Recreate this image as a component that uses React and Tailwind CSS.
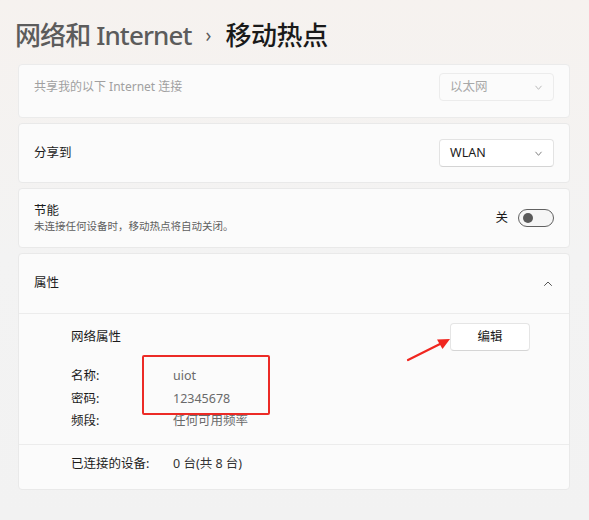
import React from "react";

const font = { fontFamily: '"Noto Sans", "Noto Sans CJK SC", sans-serif' };

function Chevron({ up, className }) {
  return (
    <svg viewBox="0 0 12 12" className={className} fill="none">
      <path
        d={up ? "M2.5 7.5 L6 4 L9.5 7.5" : "M3 4.5 L6 8 L9 4.5"}
        stroke="currentColor"
        strokeWidth="1"
        strokeLinecap="round"
        strokeLinejoin="round"
      />
    </svg>
  );
}

function Dropdown({ label, disabled }) {
  return (
    <div
      className={
        disabled
          ? "flex h-[28px] w-[115px] items-center justify-between rounded-[4px] border border-[#ececec] bg-[#fbfbfb] pl-[10px] pr-[9px] text-[12.5px] text-[#a8a8a8]"
          : "flex h-[28px] w-[115px] items-center justify-between rounded-[4px] border border-[#e3e3e3] border-b-[#d4d4d4] bg-white pl-[10px] pr-[9px] text-[12.5px] text-[#1b1b1b]"
      }
    >
      <span>{label}</span>
      <Chevron className={disabled ? "h-[11px] w-[11px] text-[#b5b5b5]" : "h-[11px] w-[11px] text-[#777]"} />
    </div>
  );
}

export default function App() {
  return (
    <div
      className="relative h-[520px] w-[589px] overflow-hidden bg-gradient-to-b from-[#f6f2ef] via-[#f3f3f3] to-[#f2f2f2] text-[#1b1b1b]"
      style={font}
    >
      <div className="flex h-[64px] items-start pl-[15px] pt-[19px]">
        <h1 className="flex items-center text-[26px] font-medium leading-[32px]">
          <span className="tracking-[-0.9px] text-[#5c5c5c]">网络和 Internet</span>
          <span className="mx-[14px] text-[19px] font-normal text-[#5c5c5c]">›</span>
          <span className="tracking-[-0.4px] text-[#1a1a1a]">移动热点</span>
        </h1>
      </div>

      <div className="ml-[18px] flex w-[552px] flex-col gap-[5px]">
        <div className="flex h-[54px] items-center justify-between rounded-[4px] border border-[#ebebeb] bg-[#fbfbfb] pb-[8px] pl-[15px] pr-[15px]">
          <span className="text-[12px] text-[#a0a0a0]">共享我的以下 Internet 连接</span>
          <Dropdown label="以太网" disabled />
        </div>

        <div className="flex h-[60px] items-center justify-between rounded-[4px] border border-[#e9e9e9] bg-[#fbfbfb] pl-[15px] pr-[15px]">
          <span className="text-[12.5px]">分享到</span>
          <Dropdown label="WLAN" />
        </div>

        <div className="flex h-[60px] items-center justify-between rounded-[4px] border border-[#e9e9e9] bg-[#fbfbfb] pl-[15px] pr-[15px]">
          <div className="flex flex-col">
            <span className="text-[12.5px] leading-[17px]">节能</span>
            <span className="text-[10.5px] leading-[15px] text-[#5f5f5f]">
              未连接任何设备时，移动热点将自动关闭。
            </span>
          </div>
          <div className="flex items-center gap-[10px]">
            <span className="text-[12.5px]">关</span>
            <div className="flex h-[18px] w-[36px] items-center rounded-full border border-[#616161] bg-[#f6f6f6] pl-[4px]">
              <div className="h-[10px] w-[10px] rounded-full bg-[#5a5a5a]" />
            </div>
          </div>
        </div>

        <div className="flex flex-col rounded-[4px] border border-[#e9e9e9] bg-[#fbfbfb]">
          <div className="flex h-[60px] items-center justify-between border-b border-[#ececec] pl-[15px] pr-[15px]">
            <span className="text-[12.5px]">属性</span>
            <Chevron up className="h-[12px] w-[12px] text-[#555]" />
          </div>

          <div className="flex h-[131px] flex-col border-b border-[#ececec] pl-[52px] pr-[39px] pt-[9px]">
            <div className="flex items-center justify-between">
              <span className="text-[12.5px]">网络属性</span>
              <button className="flex h-[28px] w-[80px] items-center justify-center rounded-[4px] border border-[#e5e5e5] border-b-[#d5d5d5] bg-white text-[12.5px] text-[#1b1b1b]">
                编辑
              </button>
            </div>
            <div className="mt-[16px] grid grid-cols-[102px_1fr] gap-y-[5px] text-[12.5px] leading-[17.5px]">
              <span>名称:</span>
              <span className="text-[#6a6a6a]">uiot</span>
              <span>密码:</span>
              <span className="text-[#6a6a6a]">12345678</span>
              <span>频段:</span>
              <span className="text-[#6a6a6a]">任何可用频率</span>
            </div>
          </div>

          <div className="flex h-[44px] items-center pb-[6px] pl-[52px] text-[12.5px]">
            <span className="w-[102px]">已连接的设备:</span>
            <span className="text-[#333]">0 台(共 8 台)</span>
          </div>
        </div>
      </div>

      <div className="absolute left-[142px] top-[355px] h-[60px] w-[128px] rounded-[2px] border-2 border-[#ec2b26]" />

      <svg className="absolute left-[404px] top-[334px] h-[30px] w-[50px]" viewBox="0 0 50 30">
        <path d="M4 26 L36 10" stroke="#f0261f" strokeWidth="2.2" strokeLinecap="round" />
        <path d="M46 5 L33 5.5 L38.5 15 Z" fill="#f0261f" />
      </svg>
    </div>
  );
}
